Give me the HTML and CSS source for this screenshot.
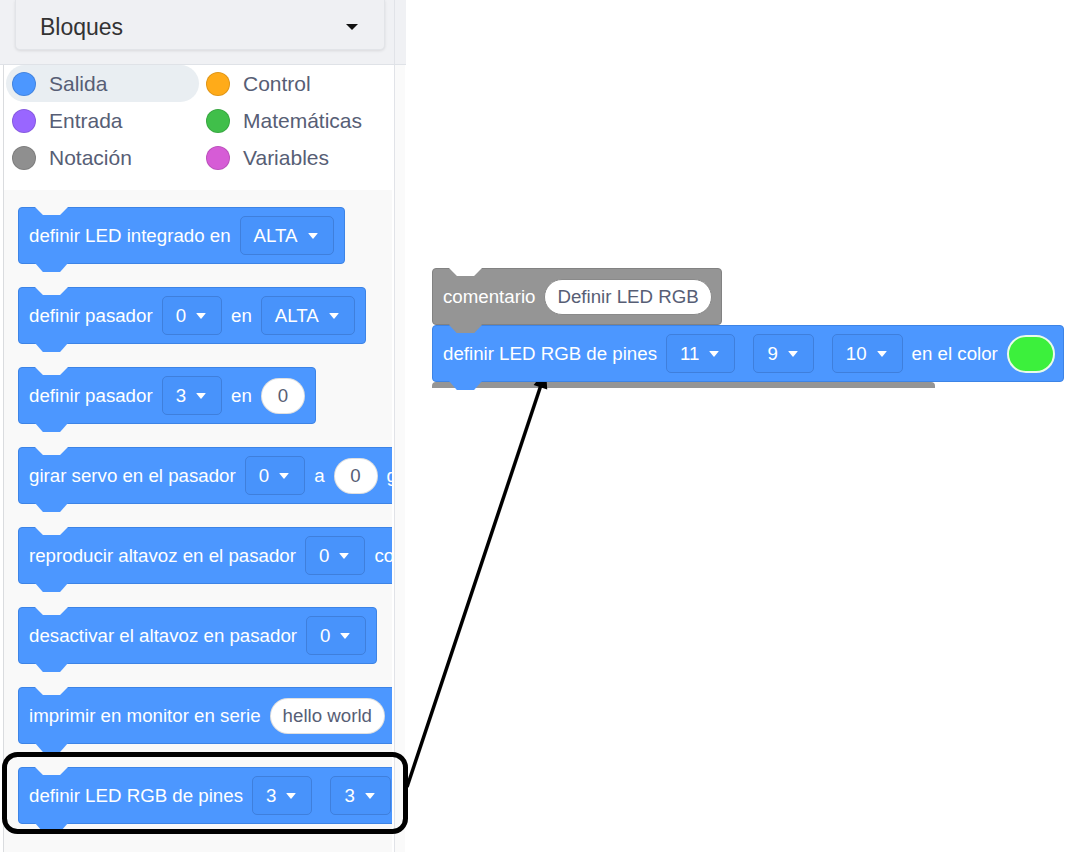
FILE: index.html
```html
<!DOCTYPE html>
<html lang="es">

<head>
    <meta charset="UTF-8">
    <meta name="viewport" content="width=device-width, initial-scale=1.0">
    <title>Bloques</title>
    <link rel="stylesheet" href="styles.css">
</head>

<body>
    <div class="page">
        <aside class="sidebar">
            <div class="top">
                <div class="header">
                    <div class="picker">
                        <span>Bloques</span>
                        <span class="picker-caret"></span>
                    </div>
                </div>
            </div>
            <div class="main">
                <div class="pane">
                    <div class="cats">
                        <div class="cat active"><span class="dot salida"></span>Salida</div>
                        <div class="cat"><span class="dot control"></span>Control</div>
                        <div class="cat"><span class="dot entrada"></span>Entrada</div>
                        <div class="cat"><span class="dot mates"></span>Matemáticas</div>
                        <div class="cat"><span class="dot notacion"></span>Notación</div>
                        <div class="cat"><span class="dot variables"></span>Variables</div>
                    </div>
                    <div class="flyout">
                        <div class="block">
                            <span>definir LED integrado en</span>
                            <span class="dd">ALTA<i class="caret"></i></span>
                        </div>
                        <div class="block">
                            <span>definir pasador</span>
                            <span class="dd">0<i class="caret"></i></span>
                            <span>en</span>
                            <span class="dd">ALTA<i class="caret"></i></span>
                        </div>
                        <div class="block">
                            <span>definir pasador</span>
                            <span class="dd">3<i class="caret"></i></span>
                            <span>en</span>
                            <span class="oval">0</span>
                        </div>
                        <div class="block">
                            <span>girar servo en el pasador</span>
                            <span class="dd">0<i class="caret"></i></span>
                            <span>a</span>
                            <span class="oval">0</span>
                            <span>g</span>
                        </div>
                        <div class="block">
                            <span>reproducir altavoz en el pasador</span>
                            <span class="dd">0<i class="caret"></i></span>
                            <span>co</span>
                        </div>
                        <div class="block">
                            <span>desactivar el altavoz en pasador</span>
                            <span class="dd">0<i class="caret"></i></span>
                        </div>
                        <div class="block">
                            <span>imprimir en monitor en serie</span>
                            <span class="oval">hello world</span>
                        </div>
                        <div class="block">
                            <span>definir LED RGB de pines</span>
                            <span class="dd">3<i class="caret"></i></span>
                            <span class="dd spaced">3<i class="caret"></i></span>
                        </div>
                    </div>
                </div>
                <div class="gutter"></div>
            </div>
        </aside>

        <section class="workspace">
            <div class="script">
                <div class="block gray">
                    <span>comentario</span>
                    <span class="oval note">Definir LED RGB</span>
                </div>
                <div class="block joined">
                    <span>definir LED RGB de pines</span>
                    <span class="dd">11<i class="caret"></i></span>
                    <span class="dd spaced">9<i class="caret"></i></span>
                    <span class="dd spaced">10<i class="caret"></i></span>
                    <span>en el color</span>
                    <span class="swatch"></span>
                </div>
                <div class="stub"></div>
            </div>
        </section>

        <!-- highlight + arrow drawn on top -->
        <svg class="annot" width="1070" height="852" viewBox="0 0 1070 852">
            <rect x="4.5" y="754.5" width="401" height="77" rx="13" fill="none" stroke="#000" stroke-width="5" />
            <line x1="407" y1="787" x2="540.5" y2="386.5" stroke="#000" stroke-width="3.5" />
            <polygon points="546,370 547.2,389.5 533.6,385" fill="#000" />
        </svg>
    </div>
</body>

</html>
```

FILE: styles.css
```css
body {
    margin: 0;
    padding: 0;
    background-color: #fff;
    font-family: "Liberation Sans", Arial, sans-serif;
}

.page {
    position: relative;
    width: 1070px;
    height: 852px;
    display: flex;
    overflow: hidden;
}

/* left side */

.sidebar {
    width: 406px;
    height: 852px;
    display: flex;
    flex-direction: column;
    flex-shrink: 0;
}

.top {
    height: 64px;
    border-bottom: 1px solid #dfe2e7;
    background-color: #f0f1f4;
    display: flex;
}

.header {
    width: 395px;
    border-right: 1px solid #e1e3e8;
    padding-left: 15px;
    box-sizing: border-box;
}

.picker {
    width: 370px;
    height: 50px;
    box-sizing: border-box;
    padding: 5px 26px 0 24px;
    background-color: #eff0f3;
    border: 1px solid #e2e4e8;
    border-top: none;
    border-radius: 0 0 5px 5px;
    box-shadow: 0 1px 3px rgba(0, 0, 0, 0.1);
    display: flex;
    align-items: center;
    justify-content: space-between;
    font-size: 23px;
    color: #333;
}

.picker-caret {
    width: 0;
    height: 0;
    border-left: 6px solid transparent;
    border-right: 6px solid transparent;
    border-top: 6px solid #111;
}

.main {
    flex: 1;
    display: flex;
}

.pane {
    margin-left: 3px;
    width: 392px;
    border-left: 1px solid #dadcdf;
    border-right: 1px solid #e1e3e8;
    box-sizing: border-box;
    display: flex;
    flex-direction: column;
}

.gutter {
    width: 10px;
    background-color: #fafafa;
}

.cats {
    height: 125px;
    box-sizing: border-box;
    padding: 0 0 0 2px;
    background-color: #fff;
    display: grid;
    grid-template-columns: 194px 194px;
    grid-auto-rows: 37px;
}

.cat {
    display: flex;
    align-items: center;
    gap: 13px;
    padding-left: 6px;
    font-size: 21px;
    color: #575e75;
}

.cat.active {
    background-color: #e9eef2;
    border-radius: 19px;
    margin-right: 1px;
}

.dot {
    width: 24px;
    height: 24px;
    border-radius: 50%;
    box-sizing: border-box;
    border: 1px solid rgba(0, 0, 0, 0.12);
    flex-shrink: 0;
}

.salida { background-color: #4c97ff; }
.control { background-color: #ffab19; }
.entrada { background-color: #9966ff; }
.mates { background-color: #40bf4a; }
.notacion { background-color: #8f8f8f; }
.variables { background-color: #d65cd6; }

.flyout {
    flex: 1;
    background-color: #f9f9f9;
    padding: 17px 0 0 14px;
    width: 374px;
    display: flex;
    flex-direction: column;
    align-items: flex-start;
    gap: 23px;
    overflow: hidden;
}

/* blocks */

.block {
    position: relative;
    display: flex;
    align-items: center;
    gap: 9px;
    height: 57px;
    box-sizing: border-box;
    padding: 0 10px;
    flex-shrink: 0;
    background-color: #4c97ff;
    border: 1px solid #3d84e6;
    border-radius: 4px;
    color: #fff;
    font-size: 18.7px;
    white-space: nowrap;
}

.block::before {
    content: "";
    position: absolute;
    left: 16px;
    top: -1px;
    width: 33px;
    height: 8px;
    background-color: #f9f9f9;
    clip-path: polygon(0 0, 100% 0, 76% 100%, 24% 100%);
}

.block::after {
    content: "";
    position: absolute;
    left: 16px;
    bottom: -9px;
    width: 33px;
    height: 9px;
    background-color: #4c97ff;
    clip-path: polygon(0 0, 100% 0, 76% 100%, 24% 100%);
}

.dd {
    display: flex;
    align-items: center;
    gap: 10px;
    height: 39px;
    box-sizing: border-box;
    padding: 0 15px 0 13px;
    background-color: #4893fb;
    border: 1px solid #3f7fdc;
    border-radius: 5px;
}

.dd.spaced {
    margin-left: 9px;
}

.caret {
    width: 0;
    height: 0;
    border-left: 5px solid transparent;
    border-right: 5px solid transparent;
    border-top: 6px solid #fff;
    border-radius: 1px;
}

.oval {
    min-width: 44px;
    height: 36px;
    box-sizing: border-box;
    padding: 0 12px;
    display: flex;
    align-items: center;
    justify-content: center;
    background-color: #fff;
    border: 1px solid rgba(0, 0, 0, 0.12);
    border-radius: 18px;
    color: #575e75;
}

/* workspace */

.workspace {
    position: relative;
    flex: 1;
    background-color: #fff;
}

.script {
    position: absolute;
    left: 26px;
    top: 268px;
    display: flex;
    flex-direction: column;
    align-items: flex-start;
}

.script .block::before {
    background-color: #fff;
}

.block.gray {
    z-index: 2;
    background-color: #959595;
    border-color: #828282;
    padding-right: 9px;
}

.block.gray::after {
    background-color: #959595;
}

.oval.note {
    border-color: #8a8a8a;
}

.block.joined {
    z-index: 1;
    padding-right: 8px;
}

.block.joined::before {
    background-color: #959595;
}

.swatch {
    width: 48px;
    height: 38px;
    box-sizing: border-box;
    background-color: #3cf03c;
    border: 2px solid #e9fbe9;
    border-radius: 19px;
}

.stub {
    position: relative;
    z-index: 0;
    width: 503px;
    height: 6px;
    background-color: #959595;
    border-radius: 4px 4px 0 0;
}

.annot {
    position: absolute;
    left: 0;
    top: 0;
    pointer-events: none;
}
```
